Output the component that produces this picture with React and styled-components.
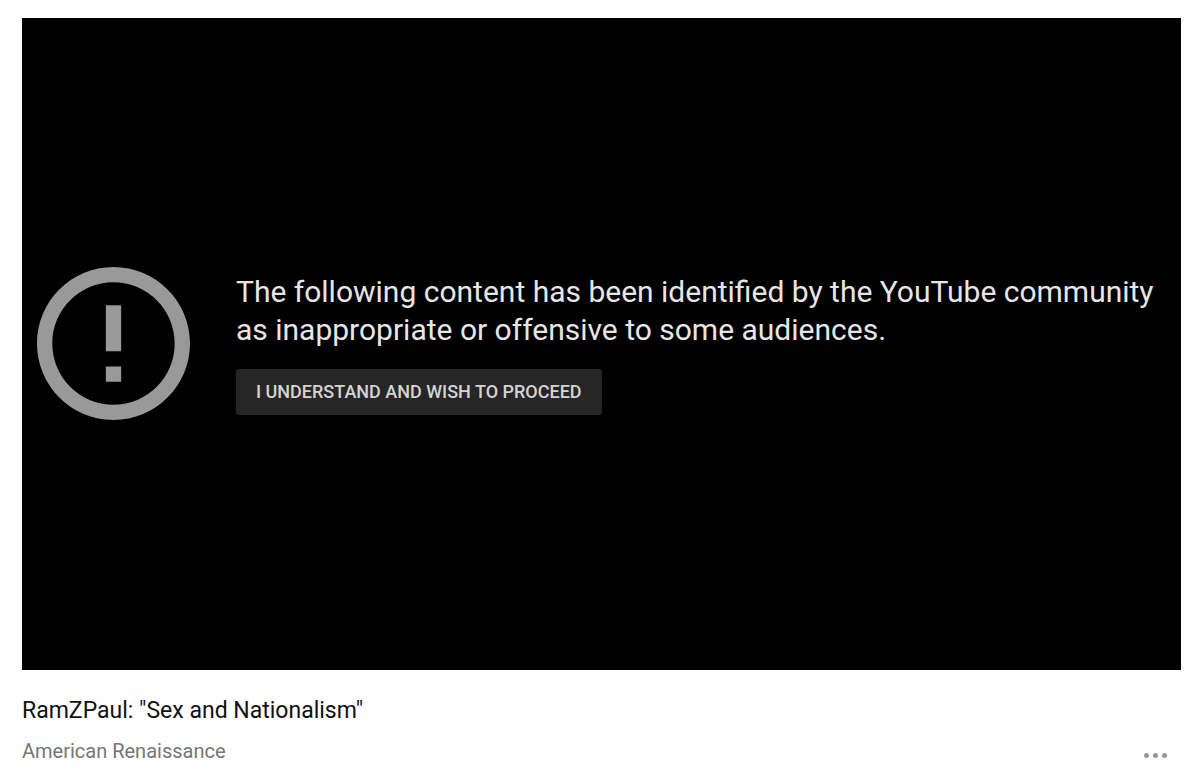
import * as React from "react";
import styled, { createGlobalStyle } from "styled-components";

const GlobalStyle = createGlobalStyle`
  body {
    margin: 0;
    background-color: #fff;
    font-family: Roboto, sans-serif;
  }
`;

const AlertIcon = () => (
    <AlertSvg viewBox="2 2 20 20" aria-hidden="true">
      <path d="M11 15h2v2h-2zm0-8h2v6h-2zm.99-5C6.47 2 2 6.48 2 12s4.47 10 9.99 10C17.52 22 22 17.52 22 12S17.52 2 11.99 2zM12 20c-4.42 0-8-3.58-8-8s3.58-8 8-8 8 3.58 8 8-3.58 8-8 8z" />
    </AlertSvg>
);

function App() {
  return (
      <Page>
        <GlobalStyle />
        <Player>
          <AlertIcon />
          <Warning>
            <Message>
              The following content has been identified by the YouTube community
              as inappropriate or offensive to some audiences.
            </Message>
            <ProceedButton type="button">I understand and wish to proceed</ProceedButton>
          </Warning>
        </Player>
        <Title>RamZPaul: "Sex and Nationalism"</Title>
        <Meta>
          <Channel href="#channel">American Renaissance</Channel>
          <MenuButton type="button" aria-label="More actions">
            <Dot />
            <Dot />
            <Dot />
          </MenuButton>
        </Meta>
      </Page>
  );
}

const Page = styled.main`
  padding: 18px 19px 0 22px;
`;

const Player = styled.section`
  display: flex;
  align-items: center;
  gap: 46px;
  box-sizing: border-box;
  aspect-ratio: 16 / 9;
  padding: 0 8px 0 15px;
  background-color: #000;
`;

const AlertSvg = styled.svg`
  flex: none;
  width: 153px;
  height: 153px;
  fill: #999;
`;

const Warning = styled.div`
  flex: 1;
`;

const Message = styled.p`
  margin: 0 0 20px;
  font-size: 30px;
  line-height: 38px;
  color: #e6e6e6;
`;

const ProceedButton = styled.button`
  height: 46px;
  padding: 0 20px;
  border: 0;
  border-radius: 3px;
  background-color: #262626;
  font-family: inherit;
  font-weight: 500;
  font-size: 18px;
  text-transform: uppercase;
  color: #d4d4d4;
  cursor: pointer;
`;

const Title = styled.h1`
  margin: 27px 0 0;
  font-weight: 400;
  font-size: 23px;
  line-height: 28px;
  color: #111;
`;

const Meta = styled.div`
  display: flex;
  justify-content: space-between;
  align-items: flex-start;
  margin-top: 14px;
`;

const Channel = styled.a`
  font-size: 20px;
  line-height: 24px;
  color: #767676;
  text-decoration: none;
`;

const MenuButton = styled.button`
  display: flex;
  gap: 4px;
  padding: 14px;
  border: 0;
  background: none;
  cursor: pointer;
`;

const Dot = styled.span`
  width: 5px;
  height: 5px;
  border-radius: 50%;
  background-color: #999;
`;

export default App;
